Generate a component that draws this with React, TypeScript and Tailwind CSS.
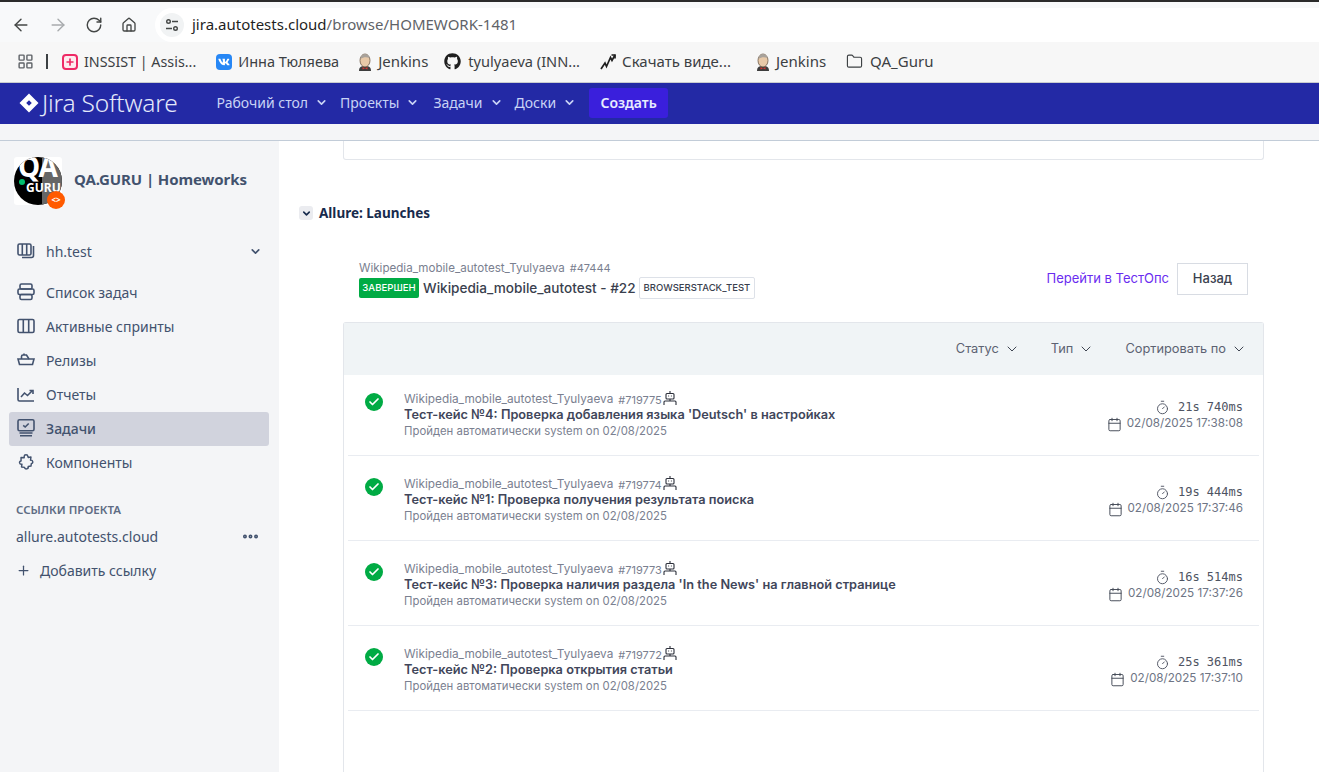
import { ArrowLeft, ArrowRight, RotateCw, Home, LayoutGrid, Folder, ChevronDown, Plus, Timer, Calendar, Check, Ellipsis } from "lucide-react"
import { FaGithub, FaVk } from "react-icons/fa"

const ui = "font-['Noto_Sans',sans-serif]"
const inter = "font-['Inter',sans-serif]"

function JenkinsIcon() {
  return (
    <svg width="18" height="18" viewBox="0 0 18 18">
      <path d="M3 18c0-4 2-5 6-5s6 1 6 5z" fill="#3d3d3d" />
      <ellipse cx="9" cy="7.5" rx="5" ry="6.5" fill="#e8c9a8" stroke="#6f5a48" strokeWidth="0.8" />
      <path d="M4.5 6C5 2 7 1 9 1s4 1 4.5 4C11 4 7 4 4.5 6z" fill="#a8a29b" />
      <path d="M6.5 14l2.500 1.500 2.500-1.500v2.500l-2.500-1-2.500 1z" fill="#d33833" />
    </svg>
  )
}

function JiraLogo() {
  return (
    <svg width="20" height="20" viewBox="0 0 20 20" fill="#fff">
      <path d="M10 0.500L19.500 10 10 19.500 5.500 15 0.500 10 5.500 5z M10 7.200L7.200 10 10 12.800 12.800 10z" fillRule="evenodd" />
    </svg>
  )
}

function BoardStackIcon() {
  return (
    <svg width="18" height="18" viewBox="0 0 18 18" fill="none" stroke="currentColor" strokeWidth="1.6">
      <rect x="1" y="2" width="13" height="11" rx="1.500" />
      <path d="M5.300 2v11M9.700 2v11" />
      <path d="M16.500 4v9.500a2 2 0 0 1-2 2H5" />
    </svg>
  )
}

function BacklogIcon() {
  return (
    <svg width="18" height="18" viewBox="0 0 18 18" fill="none" stroke="currentColor" strokeWidth="1.6">
      <rect x="3" y="1" width="12" height="5" rx="1.500" />
      <rect x="1" y="6" width="16" height="5.500" rx="1.500" />
      <rect x="3" y="11.500" width="12" height="5" rx="1.500" />
    </svg>
  )
}

function BoardIcon() {
  return (
    <svg width="18" height="18" viewBox="0 0 18 18" fill="none" stroke="currentColor" strokeWidth="1.6">
      <rect x="1" y="2.500" width="16" height="13" rx="1.500" />
      <path d="M6.300 2.500v13M11.700 2.500v13" />
    </svg>
  )
}

function ReleaseIcon() {
  return (
    <svg width="18" height="18" viewBox="0 0 18 18" fill="none" stroke="currentColor" strokeWidth="1.6">
      <path d="M4.500 8V5.500a1.500 1.500 0 0 1 1.500-1.500h3.500l2.500 4" />
      <path d="M7 4V2.500" />
      <path d="M1 8h16l-1.500 5.500H2.500z" />
    </svg>
  )
}

function ReportIcon() {
  return (
    <svg width="18" height="18" viewBox="0 0 18 18" fill="none" stroke="currentColor" strokeWidth="1.6">
      <path d="M1 3v11.500a1.500 1.500 0 0 0 1.500 1.500H17" />
      <path d="M4 12l3.500-4 3 2.500 5-5" />
      <path d="M12.500 5.500h3.500V9" />
    </svg>
  )
}

function TasksIcon() {
  return (
    <svg width="18" height="18" viewBox="0 0 18 18" fill="none" stroke="currentColor" strokeWidth="1.6">
      <rect x="1" y="0.800" width="16" height="11" rx="1.500" />
      <path d="M6.200 6.300l2 1.700 3.500-3.500" />
      <path d="M2.500 14h13M3 16.800h12" />
    </svg>
  )
}

function ComponentIcon() {
  return (
    <svg width="20" height="20" viewBox="0 0 20 20" fill="none" stroke="currentColor" strokeWidth="1.6" strokeLinejoin="round">
      <path d="M8 3.500C8 1.500 12 1.500 12 3.500L12.500 5 15.500 4.500 15 8C17.800 7.500 18.500 11.500 16 11.500L15.500 14.500 12.500 15C13 18 8.500 18.800 8.500 16L5 15.500 5.500 12.500C2.500 13 1.800 9 4.500 8.800L4.500 5 8 5.300z" />
    </svg>
  )
}

function RobotIcon() {
  return (
    <svg width="14" height="14" viewBox="0 0 14 14" fill="none" stroke="#2b2f3a" strokeWidth="1.100" className="ml-[1px] -mt-[3px]">
      <path d="M7 0v2.500" />
      <rect x="3" y="2.500" width="8" height="5.500" rx="1" />
      <path d="M5.200 5h.9M7.900 5h.9" />
      <path d="M7 8v2" />
      <path d="M1 14v-3a1 1 0 0 1 1-1h10a1 1 0 0 1 1 1v3" />
    </svg>
  )
}

function Bookmark({ icon, label, className, textClass }: { icon: React.ReactNode; label: string; className: string; textClass: string }) {
  return (
    <div className={`flex items-center ${className}`}>
      {icon}
      <span className={`text-[#3c4043] whitespace-nowrap ${textClass}`}>{label}</span>
    </div>
  )
}

function NavItem({ label, className }: { label: string; className: string }) {
  return (
    <div className={`flex items-center gap-[7px] pb-[2px] text-[14px] text-[#c9d3f5] ${className}`}>
      {label}
      <ChevronDown size={13} strokeWidth={3} />
    </div>
  )
}

const sideItems = [
  { label: "Список задач", icon: <BacklogIcon /> },
  { label: "Активные спринты", icon: <BoardIcon /> },
  { label: "Релизы", icon: <ReleaseIcon /> },
  { label: "Отчеты", icon: <ReportIcon /> },
  { label: "Задачи", icon: <TasksIcon />, active: true },
  { label: "Компоненты", icon: <ComponentIcon /> },
]

const rows = [
  { id: "#719775", title: "Тест-кейс №4: Проверка добавления языка 'Deutsch' в настройках", dur: "21s 740ms", at: "02/08/2025 17:38:08" },
  { id: "#719774", title: "Тест-кейс №1: Проверка получения результата поиска", dur: "19s 444ms", at: "02/08/2025 17:37:46" },
  { id: "#719773", title: "Тест-кейс №3: Проверка наличия раздела 'In the News' на главной странице", dur: "16s 514ms", at: "02/08/2025 17:37:26" },
  { id: "#719772", title: "Тест-кейс №2: Проверка открытия статьи", dur: "25s 361ms", at: "02/08/2025 17:37:10" },
]

function TestRow({ row, first }: { row: (typeof rows)[number]; first: boolean }) {
  return (
    <div className={`mx-[4px] flex justify-between border-b border-[#e9ecf1] pl-[17px] pr-[16px] ${first ? "h-[81px] pt-[18px]" : "h-[85px] pt-[22px]"}`}>
      <div className="flex">
        <div className="flex h-[18px] w-[18px] items-center justify-center rounded-full bg-[#00ab44]">
          <Check size={12} strokeWidth={3.5} className="text-white" />
        </div>
        <div className="ml-[21px] flex flex-col">
          <div className="flex h-[13px] items-center text-[11.8px] text-[#7a8090]">
            <span>Wikipedia_mobile_autotest_Tyulyaeva</span>
            <span className="ml-[5px] text-[11px]">{row.id}</span>
            <RobotIcon />
          </div>
          <div className="h-[17px] text-[12.75px] leading-[17px] font-semibold text-[#41465a] whitespace-nowrap">{row.title}</div>
          <div className="h-[16px] text-[11.35px] leading-[16px] text-[#7a8090]">Пройден автоматически system on 02/08/2025</div>
        </div>
      </div>
      <div className="mt-[6px] flex flex-col items-end">
        <div className="flex h-[16px] items-center gap-[8px] font-['DejaVu_Sans_Mono',monospace] text-[12px] text-[#4e5362]">
          <Timer size={15} strokeWidth={1.5} />
          <span>{row.dur}</span>
        </div>
        <div className="mt-[1px] flex h-[16px] items-center gap-[5px] text-[11.7px] text-[#6e7585]">
          <Calendar size={15} strokeWidth={1.5} className="text-[#3f4552]" />
          <span>{row.at}</span>
        </div>
      </div>
    </div>
  )
}

export default function App() {
  return (
    <div className={`flex h-[772px] w-[1319px] flex-col overflow-hidden bg-white ${ui}`}>
      <div className="h-[2px] bg-[#2b2b2b]" />
      <div className="flex h-[40px] items-end bg-[#f8f9fa] pl-[11px]">
        <div className="flex h-[34px] items-center text-[#444746]">
          <ArrowLeft size={20} strokeWidth={1.7} />
          <ArrowRight size={20} strokeWidth={1.7} className="ml-[17px] text-[#a8abad]" />
          <RotateCw size={18} strokeWidth={1.9} className="ml-[17px]" />
          <Home size={16} strokeWidth={2} className="ml-[18px]" />
        </div>
        <div className="ml-[18px] flex h-[34px] flex-1 items-center rounded-l-full bg-white pl-[5px]">
          <div className="flex h-[24px] w-[24px] items-center justify-center rounded-full bg-[#f1f3f4]">
            <svg width="14" height="14" viewBox="0 0 14 14" fill="none" stroke="#444746" strokeWidth="1.400">
              <circle cx="3.500" cy="3.500" r="1.800" />
              <path d="M7 3.500h6M1 10.500h6" />
              <circle cx="10.500" cy="10.500" r="1.800" />
            </svg>
          </div>
          <span className="ml-[8px] pb-[2px] text-[15px] text-[#1f1f1f]">jira.autotests.cloud</span>
          <span className="pb-[2px] text-[15px] text-[#5f6368]">/browse/HOMEWORK-1481</span>
        </div>
      </div>
      <div className="flex h-[41px] items-center border-b border-[#c9ccd0] bg-[#f7f7f7] pb-[1px] pl-[17px]">
        <LayoutGrid size={17} strokeWidth={2} className="text-[#5f6368]" />
        <div className="ml-[12px] h-[15px] w-[2px] bg-[#3c4043]" />
        <Bookmark className="ml-[14px] gap-[6px]" textClass="text-[14.3px]" label="INSSIST | Assis..." icon={
          <div className="flex h-[16px] w-[16px] items-center justify-center rounded-[4px] border-2 border-[#ee2a66] bg-[#fdecef]"><Plus size={10} strokeWidth={4} className="text-[#ee2a66]" /></div>
        } />
        <Bookmark className="ml-[20px] gap-[6px]" textClass="text-[14.5px]" label="Инна Тюляева" icon={
          <div className="flex h-[16px] w-[16px] items-center justify-center rounded-[4px] bg-[#2787f5] text-white"><FaVk size={12} /></div>
        } />
        <Bookmark className="ml-[17px] gap-[4px]" textClass="text-[15px]" label="Jenkins" icon={<JenkinsIcon />} />
        <Bookmark className="ml-[16px] gap-[7px]" textClass="text-[14.6px]" label="tyulyaeva (INN..." icon={<FaGithub size={17} className="text-[#1f1f1f]" />} />
        <Bookmark className="ml-[20px] gap-[6px]" textClass="text-[15px]" label="Скачать виде..." icon={
          <svg width="16" height="16" viewBox="0 0 16 16" fill="none" stroke="#1f1f1f" strokeWidth="1.700"><path d="M1 15l4-6 1.500 3.500 4-9 1.500 3L15 1" /><path d="M11.500 1H15v3.500" /></svg>
        } />
        <Bookmark className="ml-[23px] gap-[4px]" textClass="text-[15px]" label="Jenkins" icon={<JenkinsIcon />} />
        <Bookmark className="ml-[20px] gap-[7px]" textClass="text-[15px]" label="QA_Guru" icon={<Folder size={17} strokeWidth={1.6} className="text-[#3c4043]" />} />
      </div>
      <div className="flex h-[41px] items-center bg-[#2329a5] pb-[1px] pl-[19px]">
        <JiraLogo />
        <span className="ml-[3px] text-[24.5px] font-light tracking-[-0.2px] text-[#e3e8fa]">Jira Software</span>
        <NavItem className="ml-[39px]" label="Рабочий стол" />
        <NavItem className="ml-[12px]" label="Проекты" />
        <NavItem className="ml-[14px]" label="Задачи" />
        <NavItem className="ml-[12px]" label="Доски" />
        <div className="ml-[13px] flex h-[30px] w-[79px] items-center justify-center rounded-[3px] bg-[#3a1fdc] pb-[1px] text-[14px] font-semibold text-[#e8ebff]">Создать</div>
      </div>
      <div className="h-[17px] border-b border-[#c2ccd8] bg-[#f4f5f7]" />
      <div className="flex flex-1 overflow-hidden">
        <aside className="w-[279px] shrink-0 bg-[#f4f5f7] text-[#42526e]">
          <div className="flex items-center pl-[14px] pt-[16px]">
            <div className="relative h-[48px] w-[48px] rounded-[3px] bg-white">
              <div className="relative h-[48px] w-[48px] overflow-hidden rounded-full bg-black">
                <div className="absolute left-[28px] top-0 h-[48px] w-[20px] bg-[#666]" />
                <div className="absolute left-[4px] top-[-7px] text-[28px] leading-[32px] font-bold tracking-[-1px] text-white">QA</div>
                <div className="absolute left-[12px] top-[24px] text-[12px] leading-[14px] font-bold text-white">GURU</div>
              </div>
              <div className="absolute left-[5px] top-[22px] h-[6px] w-[6px] rounded-full bg-[#00c070]" />
              <div className="absolute left-[33px] top-[34px] flex h-[18px] w-[18px] items-center justify-center rounded-full bg-[#ff5a00] text-[8px] font-bold text-white">{"<>"}</div>
            </div>
            <span className="mb-[3px] ml-[12px] text-[15px] font-bold tracking-[-0.1px] whitespace-nowrap">QA.GURU | Homeworks</span>
          </div>
          <div className="mt-[30px] flex h-[32px] items-center pl-[17px] pr-[17px]">
            <BoardStackIcon />
            <span className="ml-[11px] flex-1 text-[14px]">hh.test</span>
            <ChevronDown size={13} strokeWidth={3} />
          </div>
          <div className="mt-[9px] flex flex-col">
            {sideItems.map((item) => (
              <div key={item.label} className={`ml-[9px] mr-[10px] flex h-[34px] items-center rounded-[3px] pb-[2px] pl-[8px] text-[14px] ${item.active ? "bg-[#d1d3dd] font-medium" : ""}`}>
                <div className="flex w-[18px] justify-center">{item.icon}</div>
                <span className="ml-[11px]">{item.label}</span>
              </div>
            ))}
          </div>
          <div className="mt-[21px] pl-[16px] text-[11.5px] font-semibold text-[#5e6c84]">ССЫЛКИ ПРОЕКТА</div>
          <div className="mt-[6px] flex h-[24px] items-center pl-[16px] pr-[19px] text-[14px]">
            <span className="flex-1">allure.autotests.cloud</span>
            <Ellipsis size={19} strokeWidth={3} />
          </div>
          <div className="mt-[10px] flex h-[24px] items-center pl-[16px] text-[14px]">
            <Plus size={15} strokeWidth={2} />
            <span className="ml-[9px]">Добавить ссылку</span>
          </div>
        </aside>
        <main className="flex-1 overflow-hidden">
          <div className="ml-[64px] mr-[55px] h-[19px] rounded-b-[3px] border border-t-0 border-[#e3e6eb]" />
          <div className="ml-[20px] mt-[43px] flex items-center">
            <div className="flex h-[14px] w-[14px] items-center justify-center rounded-[3px] bg-[#ebecf0]">
              <ChevronDown size={11} strokeWidth={3.5} className="text-[#172b4d]" />
            </div>
            <span className="ml-[6px] text-[13.5px] font-bold text-[#172b4d]">Allure: Launches</span>
          </div>
          <div className={`ml-[64px] mr-[55px] ${inter}`}>
            <div className="mt-[38px] flex items-center justify-between pl-[16px] pr-[16px]">
              <div>
                <div className="flex h-[15px] items-center text-[11.6px] leading-[15px] text-[#7a8090]">
                  <span>Wikipedia_mobile_autotest_Tyulyaeva</span>
                  <span className="ml-[5px] text-[11px]">#47444</span>
                </div>
                <div className="mt-[1px] flex items-center">
                  <span className="flex h-[20px] w-[60px] items-center justify-center rounded-[2px] bg-[#00ab44] text-[9.6px] font-medium text-white">ЗАВЕРШЕН</span>
                  <span className="ml-[4px] text-[13.6px] font-medium text-[#3a3f4e] whitespace-nowrap">Wikipedia_mobile_autotest - #22</span>
                  <span className="ml-[3px] flex h-[22px] items-center rounded-[2px] border border-[#dde1e8] px-[4px] text-[9.5px] font-medium text-[#3a3f4e]">BROWSERSTACK_TEST</span>
                </div>
              </div>
              <div className="mb-[3px] flex items-center">
                <span className="text-[13px] text-[#6a2cf0]">Перейти в ТестОпс</span>
                <div className="ml-[8px] flex h-[32px] w-[71px] items-center justify-center border border-[#d8dce3] text-[13px] font-medium text-[#3a3f4e]">Назад</div>
              </div>
            </div>
            <div className="mt-[23px] flex min-h-[500px] flex-col rounded-t-[3px] border-x border-t border-[#e3e6eb]">
              <div className="flex h-[52px] items-center justify-end gap-[31px] bg-[#f0f4f6] pb-[1px] pr-[16px] text-[12.8px] text-[#5c6272]">
                <div className="flex items-center gap-[5px]">Статус <ChevronDown size={16} strokeWidth={1.5} className="text-[#3f4552]" /></div>
                <div className="flex items-center gap-[5px]">Тип <ChevronDown size={16} strokeWidth={1.5} className="text-[#3f4552]" /></div>
                <div className="flex items-center gap-[5px]">Сортировать по <ChevronDown size={16} strokeWidth={1.5} className="text-[#3f4552]" /></div>
              </div>
              {rows.map((row, i) => (
                <TestRow key={row.id} row={row} first={i === 0} />
              ))}
            </div>
          </div>
        </main>
      </div>
    </div>
  )
}
